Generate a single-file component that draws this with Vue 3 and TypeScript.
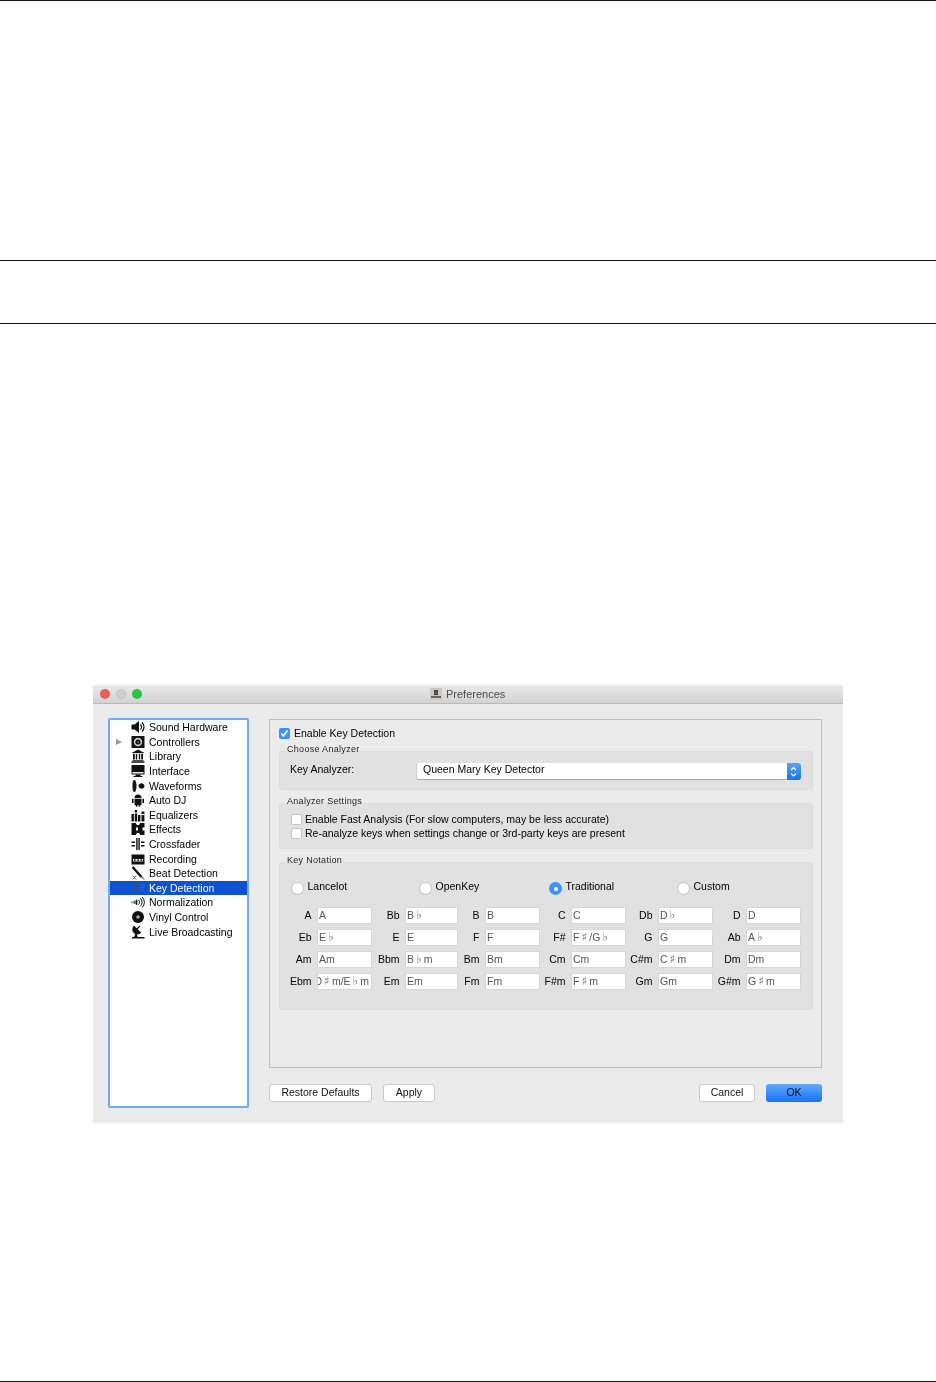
<script setup lang="ts">
interface Shape { d: string; fill?: string; stroke?: string; sw?: number }
interface Item { name: string; shapes: Shape[]; arrow?: boolean; selected?: boolean }

const K = '#111'
const items: Item[] = [
  { name: 'Sound Hardware', shapes: [
    { d: 'M.5 4.500h3L8 1v12L3.500 9.500h-3z', fill: K },
    { d: 'M9.500 4.500a3.500 3.500 0 0 1 0 5M11 2.500a6 6 0 0 1 0 9', stroke: K, sw: 1.2 },
  ] },
  { name: 'Controllers', arrow: true, shapes: [
    { d: 'M.5 1h13v12H.5z', fill: K },
    { d: 'M7 2.800a4.200 4.200 0 1 0 0 8.400a4.200 4.200 0 1 0 0-8.400z', fill: '#ccc' },
    { d: 'M7 4.400a2.600 2.600 0 1 0 0 5.200a2.600 2.600 0 1 0 0-5.200z', fill: K },
    { d: 'M7 6.200a.8.8 0 1 0 0 1.600a.8.8 0 1 0 0-1.600z', fill: '#999' },
  ] },
  { name: 'Library', shapes: [
    { d: 'M7 .5l6.500 3.500H.5z M.5 12.300h13v1.400H.5z M1.500 11h11v.8h-11z', fill: K },
    { d: 'M2 4.800h1.800v5.800H2z M4.800 4.800h1.400v5.800H4.800z M7.800 4.800h1.400v5.800H7.800z M10.200 4.800H12v5.800h-1.800z', fill: K },
  ] },
  { name: 'Interface', shapes: [
    { d: 'M.5 1h13v9.500H.5z', fill: K },
    { d: 'M1.500 8h11v1.500h-11z', fill: '#eee' },
    { d: 'M4.500 10.500h5V12h2v1H2.500v-1h2z', fill: K },
  ] },
  { name: 'Waveforms', shapes: [
    { d: 'M3.200 1c1.600 0 2.300 3 2.300 6s-.7 6-2.300 6S1.500 10 1.500 7s.1-6 1.700-6z', fill: K },
    { d: 'M10 4.500c.8-.8 1.200-.4 1.500.2.6-.2 2 .7 2 2.300s-1.400 2.500-2 2.300c-.3.600-.7 1-1.500.2-1.200-.2-2.500-1.200-2.500-2.500S8.800 4.700 10 4.500z', fill: K },
  ] },
  { name: 'Auto DJ', shapes: [
    { d: 'M3.500 5a3.500 3.500 0 0 1 7 0z M3.500 5.700h7v5.500a1 1 0 0 1-1 1h-5a1 1 0 0 1-1-1z', fill: K },
    { d: 'M1 5.700h1.600v4.300H1z M11.400 5.700H13v4.300h-1.600z M4.800 12h1.400v1.800H4.800z M7.800 12h1.400v1.800H7.800z', fill: K },
  ] },
  { name: 'Equalizers', shapes: [
    { d: 'M.5 6h2.400v7.500H.5z M3.800 2h2.400v11.500H3.800z M7 7h2.400v6.500H7z M10.500 3.500h2.900v10h-2.900z', fill: K },
    { d: 'M3.500 4.500h3v1h-3z M10.300 6h3.200v1h-3.200z', fill: '#fff' },
  ] },
  { name: 'Effects', shapes: [
    { d: 'M.5 1h4.500c0 1.500 1 2 2 2s2-.5 2-2h4.500v4.500h-2v3h2V13H9c0-1.500-1-2-2-2s-2 .5-2 2H.5z', fill: K },
    { d: 'M5 5.500h2v3H5z', fill: '#fff' },
  ] },
  { name: 'Crossfader', shapes: [
    { d: 'M.5 4.500h3.500v1.500H.5z M.5 8h3.500v1.500H.5z M10 4.500h3.500v1.500H10z M10 8h3.500v1.500H10z', fill: K },
    { d: 'M5.200 1h1.400v12H5.200z M7.400 1h1.400v12H7.400z', fill: K },
  ] },
  { name: 'Recording', shapes: [
    { d: 'M.5 2.500h13v10H.5z', fill: K },
    { d: 'M2 7h10v2.500H2z', fill: '#ddd' },
    { d: 'M3 7.500h1.500V9H3z M6.300 7.500h1.500V9H6.300z M9.500 7.500H11V9H9.500z', fill: K },
  ] },
  { name: 'Beat Detection', shapes: [
    { d: 'M1.500 1l9 10', stroke: K, sw: 2.400 },
    { d: 'M10.500 11l2.500 2.500', stroke: K, sw: 1 },
    { d: 'M2 9.500l3 4M5 9.500l-3 4', stroke: '#555', sw: .9 },
  ] },
  { name: 'Key Detection', selected: true, shapes: [
    { d: 'M5.500 1c1.500 2 1 3.500-.5 5-1.500 1.500-2 2.500-1.500 4 .6 1.500 3.500 1.500 4-.3.4-1.500-1.400-2.600-2.500-1.700-.5.400-.3 1.200.3 1.400M5.500 1l1.200 12', stroke: '#3a4c88', sw: 1 },
    { d: 'M9 4h4M9 6.500h4M9 9h4', stroke: '#4a68b8', sw: .7 },
  ] },
  { name: 'Normalization', shapes: [
    { d: 'M.5 6.500h1.200v1.500H.5z M2.500 5.800h1.500v3H2.500z', fill: '#555' },
    { d: 'M4.500 5.500l1.800-1.500v6.500L4.500 9z', fill: K },
    { d: 'M7.500 5a3 3 0 0 1 0 4.500M9.300 3.300a5.500 5.500 0 0 1 0 8M11.200 2a7.500 7.500 0 0 1 0 10.500', stroke: K, sw: 1 },
  ] },
  { name: 'Vinyl Control', shapes: [
    { d: 'M7 1a6 6 0 1 0 0 12a6 6 0 1 0 0-12z', fill: K },
    { d: 'M7 5.200a1.800 1.800 0 1 0 0 3.600a1.800 1.800 0 1 0 0-3.600z', fill: '#aaa' },
  ] },
  { name: 'Live Broadcasting', shapes: [
    { d: 'M3 .5C.8 2.800.7 6 2.800 8c2 2 5.300 2 7.500-.2z', fill: K },
    { d: 'M5.500 4.500l3.500-3.500', stroke: K, sw: 1.100 },
    { d: 'M4.500 8.500l-1.500 3.500H1v1.500h12.500V12H6.500l-.5-3z', fill: K },
  ] },
]

const keys: [string, string][] = [
  ['A', 'A'], ['Bb', 'B♭'], ['B', 'B'], ['C', 'C'], ['Db', 'D♭'], ['D', 'D'],
  ['Eb', 'E♭'], ['E', 'E'], ['F', 'F'], ['F#', 'F♯/G♭'], ['G', 'G'], ['Ab', 'A♭'],
  ['Am', 'Am'], ['Bbm', 'B♭m'], ['Bm', 'Bm'], ['Cm', 'Cm'], ['C#m', 'C♯m'], ['Dm', 'Dm'],
  ['Ebm', 'D♯m/E♭m'], ['Em', 'Em'], ['Fm', 'Fm'], ['F#m', 'F♯m'], ['Gm', 'Gm'], ['G#m', 'G♯m'],
]
const parts = (v: string): string[] => v.split(/([♭♯])/).filter(Boolean)
const isAccidental = (s: string): boolean => s === '♭' || s === '♯'
const notations = ['Lancelot', 'OpenKey', 'Traditional', 'Custom']
const settings = [
  'Enable Fast Analysis (For slow computers, may be less accurate)',
  'Re-analyze keys when settings change or 3rd-party keys are present',
]
</script>

<template>
  <div class="page">
    <div class="band-top"></div>
    <div class="band-mid"></div>
    <div class="figure">
      <section class="window">
        <header class="titlebar">
          <span class="light red"></span>
          <span class="light grey"></span>
          <span class="light green"></span>
          <div class="title">
            <svg class="title-icon" viewBox="0 0 12 12" width="12" height="12">
              <path d="M0 0h12v12H0z" fill="#c9c9c9" />
              <path d="M4 2h4v5H4z" fill="#444" />
              <path d="M5 4h2v2H5z" fill="#b44" />
              <path d="M1 8h10v2H1z" fill="#666" />
            </svg>
            <span>Preferences</span>
          </div>
        </header>
        <div class="body">
          <aside class="sidebar">
            <div v-for="item in items" :key="item.name" class="row" :class="{ selected: item.selected }">
              <span class="arrow-slot"><i v-if="item.arrow" class="arrow"></i></span>
              <svg class="icon" viewBox="0 0 14 14" width="14" height="14">
                <path
                  v-for="(s, i) in item.shapes"
                  :key="i"
                  :d="s.d"
                  :fill="s.fill || 'none'"
                  :stroke="s.stroke || 'none'"
                  :stroke-width="s.sw || 0"
                />
              </svg>
              <span class="row-text">{{ item.name }}</span>
            </div>
          </aside>
          <div class="main">
            <div class="pane">
              <label class="enable">
                <span class="check on">
                  <svg viewBox="0 0 11 11" width="11" height="11"><path d="M2.500 5.500l2 2.500 4-5.500" fill="none" stroke="#fff" stroke-width="1.500" /></svg>
                </span>
                Enable Key Detection
              </label>

              <fieldset class="group g-analyzer">
                <legend>Choose Analyzer</legend>
                <span class="field-label">Key Analyzer:</span>
                <div class="combo">
                  <span class="combo-text">Queen Mary Key Detector</span>
                  <span class="combo-btn">
                    <svg viewBox="0 0 13 17" width="13" height="17"><path d="M4 7l2.500-2.500L9 7M4 10.500L6.500 13 9 10.500" fill="none" stroke="#fff" stroke-width="1.200" /></svg>
                  </span>
                </div>
              </fieldset>

              <fieldset class="group g-settings">
                <legend>Analyzer Settings</legend>
                <label v-for="s in settings" :key="s" class="setting">
                  <span class="check"></span>{{ s }}
                </label>
              </fieldset>

              <fieldset class="group g-notation">
                <legend>Key Notation</legend>
                <div class="radios">
                  <label v-for="n in notations" :key="n" class="radio-item">
                    <span class="radio" :class="{ on: n === 'Traditional' }"></span>
                    <span class="radio-text">{{ n }}</span>
                  </label>
                </div>
                <div class="key-grid">
                  <template v-for="k in keys" :key="k[0]">
                    <span class="key-label">{{ k[0] }}</span>
                    <span class="key-field"><span class="key-val"><template v-for="(p, i) in parts(k[1])" :key="i"><span v-if="isAccidental(p)" class="accidental">{{ p }}</span><template v-else>{{ p }}</template></template></span></span>
                  </template>
                </div>
              </fieldset>
            </div>
            <footer class="actions">
              <button class="btn restore">Restore Defaults</button>
              <button class="btn apply">Apply</button>
              <span class="spacer"></span>
              <button class="btn cancel">Cancel</button>
              <button class="btn ok">OK</button>
            </footer>
          </div>
        </div>
      </section>
    </div>
    <div class="band-bottom"></div>
  </div>
</template>

<style>
html, body { margin: 0; background: #fff; }
</style>

<style scoped>
.page {
  width: 936px;
  height: 1382px;
  display: flex;
  flex-direction: column;
  font-family: "Liberation Sans", "DejaVu Sans", sans-serif;
  color: #000;
  overflow: hidden;
}
.band-top { height: 260px; border-top: 1px solid #111; box-sizing: border-box; flex: none; }
.band-mid { height: 64px; border-top: 1px solid #111; border-bottom: 1px solid #111; box-sizing: border-box; flex: none; }
.figure { flex: none; padding: 361px 93px 0; height: 799px; box-sizing: border-box; }
.band-bottom { flex: none; margin-top: auto; border-bottom: 1px solid #111; }

.window {
  width: 750px;
  height: 438px;
  background: #ebebeb;
  border-radius: 4px 4px 0 0;
  display: flex;
  flex-direction: column;
  filter: blur(0.25px);
}
.titlebar {
  height: 18px;
  flex: none;
  position: relative;
  display: flex;
  align-items: center;
  gap: 6px;
  padding-left: 7px;
  background: linear-gradient(#e9e9e9, #d2d2d2);
  border-bottom: 1px solid #b9b9b9;
  border-radius: 4px 4px 0 0;
}
.light { width: 10px; height: 10px; border-radius: 50%; }
.red { background: #f25a55; }
.grey { background: #cfcfcf; border: 1px solid #c2c2c2; box-sizing: border-box; }
.green { background: #2bc33f; }
.title {
  position: absolute;
  left: 337px;
  top: 2px;
  display: flex;
  align-items: center;
  gap: 4px;
  font-size: 11px;
  line-height: 14px;
  color: #4d4d4d;
}
.body { flex: 1; display: flex; padding: 14px 21px 0 15px; }

.sidebar {
  width: 141px;
  height: 390px;
  flex: none;
  box-sizing: border-box;
  background: #fff;
  border: 2px solid #6cacf8;
  border-radius: 2px;
  padding-top: 0;
}
.row {
  height: 14.6px;
  display: flex;
  align-items: center;
  font-size: 10.5px;
}
.arrow-slot { width: 21px; flex: none; display: flex; padding-left: 6px; box-sizing: border-box; }
.arrow {
  width: 0;
  height: 0;
  border-left: 6px solid #9a9a9a;
  border-top: 3.500px solid transparent;
  border-bottom: 3.500px solid transparent;
}
.icon { flex: none; }
.row-text { margin-left: 4px; white-space: nowrap; }
.row.selected { background: #0e52d1; color: #fff; font-weight: 400; }

.main { margin: 1px 0 0 20px; width: 553px; }
.pane {
  height: 349px;
  box-sizing: border-box;
  border: 1px solid #bdbdbd;
  padding: 7px 8px 0 9px;
}
.enable {
  display: flex;
  align-items: center;
  gap: 4px;
  height: 12px;
  font-size: 10.5px;
}
.check {
  flex: none;
  width: 11px;
  height: 11px;
  box-sizing: border-box;
  background: #fff;
  border: 1px solid #c4c4c4;
  border-radius: 2px;
  display: block;
}
.check.on { background: #3f93f5; border: 0; }
.check svg { display: block; }

.group {
  margin: 0;
  padding: 0;
  min-width: 0;
  box-sizing: border-box;
  position: relative;
  background: #e1e1e1;
  border: 1px solid #dcdcdc;
  border-radius: 3px;
}
.group legend {
  position: absolute;
  left: 6px;
  top: -8px;
  padding: 0 1px;
  font-size: 9px;
  line-height: 11px;
  letter-spacing: 0.3px;
  color: #222;
  background: linear-gradient(#ebebeb 65%, #e1e1e1 65%);
}
.g-analyzer {
  margin-top: 12px;
  height: 39px;
  display: flex;
  align-items: flex-start;
  padding: 11px 11px 0 10px;
}
.field-label { width: 126px; font-size: 10.5px; line-height: 13px; flex: none; }
.combo {
  flex: 1;
  height: 17px;
  display: flex;
  background: #fff;
  border-bottom: 1px solid #ababab;
  border-left: 1px solid #ccc;
  border-radius: 3px;
  box-sizing: border-box;
  margin-top: 0;
}
.combo-text { flex: 1; padding-left: 6px; font-size: 10.5px; line-height: 13px; }
.combo-btn {
  flex: none;
  width: 14px;
  height: 17px;
  border-radius: 0 3px 3px 0;
  background: linear-gradient(#5aa3f8, #1673f5);
  display: block;
}
.combo-btn svg { display: block; }

.g-settings {
  margin-top: 13px;
  height: 46px;
  padding: 8px 0 0 11px;
}
.setting {
  display: flex;
  align-items: center;
  gap: 3px;
  height: 14px;
  font-size: 10.5px;
  white-space: nowrap;
}
.g-notation {
  margin-top: 13px;
  height: 148px;
  padding: 17px 0 0 11px;
}
.radios { display: grid; grid-template-columns: 128px 130px 128px 128px; }
.radio-item { display: flex; align-items: flex-start; gap: 3.500px; height: 14px; }
.radio {
  flex: none;
  width: 13px;
  height: 13px;
  box-sizing: border-box;
  margin-top: 2px;
  background: #fff;
  border: 1px solid #c0c0c0;
  border-radius: 50%;
  position: relative;
}
.radio.on { background: #3f93f5; border: 0; }
.radio.on::after {
  content: "";
  position: absolute;
  left: 4.500px;
  top: 4.500px;
  width: 4px;
  height: 4px;
  border-radius: 50%;
  background: #fff;
}
.radio-text { font-size: 10.5px; line-height: 12px; }
.key-grid {
  margin: 13px 0 0 -1px;
  display: grid;
  grid-template-columns: 27px 55px 33px 53px 27px 55px 31px 55px 32px 55px 33px 55px;
  grid-auto-rows: 17px;
  row-gap: 5px;
}
.key-label { text-align: right; padding-right: 5.500px; font-size: 10.5px; line-height: 16px; white-space: nowrap; }
.key-field {
  background: #fff;
  border: 1px solid #d6d6d6;
  box-sizing: border-box;
  padding: 0 1px;
  display: flex;
  justify-content: flex-start;
  overflow: hidden;
  font-size: 10.5px;
  line-height: 15px;
  color: #555;
  white-space: nowrap;
}
.key-val { flex: none; }
.accidental {
  font-family: "DejaVu Sans", sans-serif;
  font-size: 12px;
  line-height: 0;
  margin: 0 2px;
  color: #777;
}
.key-grid > .key-field:nth-child(38) { justify-content: flex-end; padding-right: 2px; }

.actions { display: flex; margin-top: 16px; gap: 11px; }
.spacer { flex: 1; }
.btn {
  height: 18px;
  padding: 0 0 3px;
  box-sizing: border-box;
  background: #fff;
  border: 1px solid #c8c8c8;
  border-radius: 3px;
  font: 10.5px/14px "Liberation Sans", sans-serif;
  color: #111;
}
.restore { width: 103px; }
.apply { width: 52px; }
.cancel { width: 56px; }
.ok {
  width: 56px;
  border: 0;
  background: linear-gradient(#62a8f9, #1473f6);
}
</style>
